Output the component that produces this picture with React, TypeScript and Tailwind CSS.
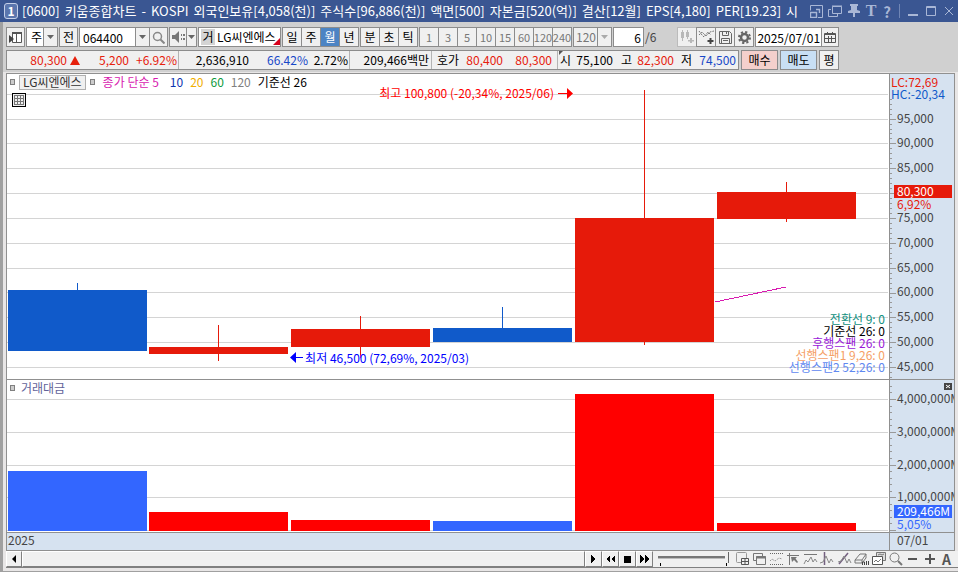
import type { ReactNode } from "react";
import clsx from "clsx";

const PRICE_H = 305;
const VOLUME_H = 152;
const PLOT_W = 882;

const priceY = (v: number) => 293 - (v - 45000) * 0.00497;
const volumeY = (v: number) => 150 - v * 32.75;

const red = "#e61a0a";
const blue = "#105aca";

const titleParts = [
  "[0600]", "키움종합차트", "-", "KOSPI", "외국인보유[4,058(천)]", "주식수[96,886(천)]", "액면[500]",
  "자본금[520(억)]", "결산[12월]", "EPS[4,180]", "PER[19.23]", "시",
];

const candles = [
  { x: 1, top: 216, bottom: 277, high: 209, low: 277, color: blue, vol: 397, volColor: "#3366ff" },
  { x: 142, top: 273, bottom: 280, high: 251, low: 287, color: red, vol: 438, volColor: "#ff0000" },
  { x: 284, top: 255, bottom: 273, high: 242, low: 284, color: red, vol: 446, volColor: "#ff0000" },
  { x: 426, top: 254, bottom: 268, high: 233, low: 268, color: blue, vol: 447, volColor: "#3366ff" },
  { x: 568, top: 144, bottom: 268, high: 16, low: 271, color: red, vol: 320, volColor: "#ff0000" },
  { x: 710, top: 118, bottom: 145, high: 108, low: 148, color: red, vol: 449, volColor: "#ff0000" },
];

const priceTicks = [95000, 90000, 85000, 80000, 75000, 70000, 65000, 60000, 55000, 50000, 45000];
const volumeTicks = [4, 3, 2, 1];

const indicators = [
  { text: "전환선 9: 0", color: "text-[#109080]" },
  { text: "기준선 26: 0", color: "text-black" },
  { text: "후행스팬 26: 0", color: "text-[#9a1ad8]" },
  { text: "선행스팬1 9,26: 0", color: "text-[#f5a066]" },
  { text: "선행스팬2 52,26: 0", color: "text-[#6088f0]" },
];

type BtnProps = { label?: string; children: ReactNode; className?: string; bg?: string };

const Btn = ({ label, children, className, bg = "bg-[#f0f0f0]" }: BtnProps) => (
  <button
    aria-label={label}
    className={clsx("flex h-5 shrink-0 items-center justify-center overflow-hidden border border-[#8c8c8c] leading-none", bg, className)}
  >
    {children}
  </button>
);

const Caret = ({ color = "#666" }: { color?: string }) => (
  <svg width="7" height="4" viewBox="0 0 7 4" fill={color}>
    <path d="M0 0h7L3.5 4z" />
  </svg>
);

const Select = ({ label, value, className, muted }: { label: string; value: string; className: string; muted?: boolean }) => (
  <div className={clsx("relative h-5 shrink-0 border border-[#8c8c8c]", className)}>
    <select aria-label={label} className={clsx("h-full w-full appearance-none", muted ? "bg-[#f0f0f0] pl-[2px] text-[#777]" : "bg-white pl-1")}>
      <option>{value}</option>
    </select>
    <span className="pointer-events-none absolute inset-y-0 right-0 flex w-[14px] items-center justify-center border-l border-[#8c8c8c] bg-[#f0f0f0]">
      <Caret color={muted ? "#aaa" : "#666"} />
    </span>
  </div>
);

const TitleBar = () => (
  <header className="flex h-[22px] items-center bg-[#3a5692] pl-1 text-white">
    <span className="flex h-4 w-[14px] items-center justify-center rounded-[3px] border border-[#c5d0e8] bg-[#5b76ae] text-[12px] font-bold leading-none">1</span>
    <h1 className="ml-1 flex min-w-0 flex-1 gap-[5px] overflow-hidden whitespace-nowrap text-[13px] leading-5">
      {titleParts.map((t) => (
        <span key={t}>{t}</span>
      ))}
    </h1>
    <div className="flex h-full items-center text-[#a9b7d6]">
      <button aria-label="창 크기" className="flex w-[18px] justify-center">
        <svg width="13" height="13" viewBox="0 0 13 13" fill="none" stroke="currentColor">
          <path d="M.5 5.500V.5h12v12H8" />
          <path d="M.5 7.500h6v5h-6zM6 4.500h3.500V8" strokeWidth="1.400" />
        </svg>
      </button>
      <button aria-label="창 복제" className="flex w-5 justify-center">
        <svg width="14" height="13" viewBox="0 0 14 13" fill="none" stroke="currentColor">
          <path d="M4.500 1.500h9v7h-9zM4 1h10" /><path d="M3 4.500H.5v7h9V9" />
        </svg>
      </button>
      <button aria-label="고정" className="flex w-[18px] justify-center">
        <svg width="12" height="14" viewBox="0 0 12 14" fill="currentColor">
          <path d="M2 0h8v2H9v4l3 1v2H7v4H5V9H0V7l3-1V2H2z" />
        </svg>
      </button>
      <button aria-label="글꼴" className="w-4 font-['Liberation_Serif',serif] text-[16px] font-bold leading-none">T</button>
      <button aria-label="도움말" className="w-4 text-[15px] font-bold leading-none">?</button>
      <span className="mx-1 h-[14px] w-px bg-[#7086b5]" />
      <button aria-label="최소화" className="w-[18px]">
        <svg width="18" height="12"><path d="M4 9h10v2H4z" fill="currentColor" /></svg>
      </button>
      <button aria-label="최대화" className="w-[18px]">
        <svg width="18" height="12" fill="none" stroke="currentColor"><path d="M4.500 1.500h9v9h-9zM4 2.500h10" /></svg>
      </button>
      <button aria-label="닫기" className="w-[18px]">
        <svg width="18" height="12" fill="none" stroke="currentColor"><path d="M5 2l8 8M13 2l-8 8" /></svg>
      </button>
    </div>
  </header>
);

const Toolbar = () => (
  <div className="flex h-5 gap-px overflow-hidden">
    <Btn label="메뉴 열기" className="w-[19px]">
      <svg width="15" height="13" viewBox="0 0 15 13">
        <path d="M4.500 1.500h9v10h-9z" fill="#fff" stroke="#555" />
        <path d="M4 1h10v2H4zM8 3h1v8H8z" fill="#555" />
        <path d="M1 4l5 4-5 4z" fill="#444" />
      </svg>
    </Btn>
    <Select label="종류" value="주" className="w-[32px]" />
    <Btn className="w-[19px]">전</Btn>
    <div className="flex">
      <input aria-label="종목코드" defaultValue="064400" className="h-5 w-[57px] border border-[#8c8c8c] bg-white pl-[3px]" />
      <Btn label="종목 목록" className="w-[14px] border-l-0"><Caret /></Btn>
      <Btn label="종목 검색" className="w-[18px] border-l-0">
        <svg width="13" height="13" fill="none" stroke="#888">
          <circle cx="5.500" cy="5.500" r="4" strokeWidth="1.500" /><path d="M8.500 8.500l4 4" strokeWidth="2" />
        </svg>
      </Btn>
    </div>
    <div className="flex">
      <Btn label="소리" className="w-[18px]">
        <svg width="15" height="12" fill="#777">
          <path d="M1 4h3l4-4v12L4 8H1zM10 3h1v2h-1zM10 7h1v2h-1zM12 3h2v2h-2zM12 7h2v2h-2z" />
        </svg>
      </Btn>
      <Btn label="소리 목록" className="w-[10px] border-l-0"><Caret /></Btn>
    </div>
    <div className="relative flex h-5 w-[83px] shrink-0 items-center overflow-hidden whitespace-nowrap border border-[#8c8c8c] bg-white">
      <button className="ml-[2px] h-4 w-[14px] bg-[#d4d4d4] leading-none">거</button>
      <span className="ml-[2px] leading-none">LG씨엔에스</span>
      <svg width="7" height="7" className="absolute bottom-[1px] right-0"><path d="M7 0v7H0z" fill="#d8001c" /></svg>
    </div>
    <div className="flex">
      {["일", "주", "월", "년"].map((t) => (
        <Btn key={t} bg={t === "월" ? "bg-[#4c84c4]" : undefined} className={clsx("-mr-px w-5 last:mr-0", t === "월" && "text-white")}>{t}</Btn>
      ))}
    </div>
    <div className="flex">
      {["분", "초", "틱"].map((t) => (
        <Btn key={t} className="-mr-px w-5 last:mr-0">{t}</Btn>
      ))}
    </div>
    <div className="flex text-[11px] text-[#777]">
      {["1", "3", "5", "10", "15", "60", "120", "240"].map((t) => (
        <Btn key={t} className="-mr-px w-5 last:mr-0">{t}</Btn>
      ))}
    </div>
    <Select label="분 단위" value="120" className="w-[39px]" muted />
    <label className="flex items-center">
      <input aria-label="표시 개수" defaultValue="6" className="h-5 w-[31px] border border-[#8c8c8c] bg-white pr-[2px] text-right" />
      <span className="ml-px text-[#444]">/6</span>
    </label>
    <div className="ml-5 flex">
      <Btn label="캔들 추가" className="-mr-px w-5 border-[#bbb]">
        <svg width="16" height="14" fill="#b8b8b8">
          <path d="M3 0h1v11H3zM2 2h3v6H2zM8 0h1v9H8zM7 2h3v5H7zM11 8h2v5h-2zM9 10h6v1.500H9z" />
        </svg>
      </Btn>
      <Btn label="지표 추가" className="-mr-px w-5">
        <svg width="17" height="15" fill="none" stroke="#777">
          <path d="M1 5l3-3 4 4 4-4 4-1M1 1l3 4 2 2 4-5 3 3" strokeDasharray="2 1" /><path d="M12.500 8v6M9.500 11h6" stroke="#444" strokeWidth="2" />
        </svg>
      </Btn>
      <Btn label="저장" className="-mr-px w-5">
        <svg width="15" height="15" fill="none" stroke="#666">
          <path d="M1.500 1.500h10l2 2v10h-12zM4.500 1.500v4h6v-4M3.500 13.500v-5h8v5" /><path d="M8.500 2v2M5 10.500h5" />
        </svg>
      </Btn>
      <Btn label="설정" className="w-5">
        <svg width="13" height="13" fill="none" stroke="#666">
          <circle cx="6.500" cy="6.500" r="3.500" strokeWidth="2.500" />
          <circle cx="6.500" cy="6.500" r="5.500" strokeWidth="2" strokeDasharray="2.200 2.120" />
        </svg>
      </Btn>
    </div>
    <div className="flex">
      <input aria-label="날짜" defaultValue="2025/07/01" className="h-5 w-[67px] border border-[#8c8c8c] bg-white pl-px" />
      <Btn label="달력" className="w-[17px] border-l-0">
        <svg width="12" height="11" fill="none" stroke="#555">
          <path d="M.5 1.500h11v9H.5zM0 2.500h12M4.500 4v6M7.500 4v6M1 6.500h10" /><path d="M3.500 0v2M8.500 0v2" />
        </svg>
      </Btn>
    </div>
  </div>
);

const Quote = () => (
  <div className="flex h-5 gap-[2px] overflow-hidden whitespace-nowrap leading-[18px]">
    <div className="flex w-[733px] shrink-0 border border-[#8c8c8c] bg-[#f0f0f0] text-right">
      <span className="w-[60px] text-[#e6200c]">80,300</span>
      <svg width="14" height="18" fill="#e6200c"><path d="M8 5l5 9H3z" /></svg>
      <span className="w-[48px] text-[#e6200c]">5,200</span>
      <span className="w-[50px] border-r border-[#b4b4b4] pr-px text-[#e6200c]">+6.92%</span>
      <span className="w-[70px]">2,636,910</span>
      <span className="w-[59px] text-[#1848c8]">66.42%</span>
      <span className="w-[42px] border-r border-[#b4b4b4] pr-px">2.72%</span>
      <span className="w-[82px] border-r border-[#b4b4b4] pr-[2px]">209,466백만</span>
      <span className="w-[27px]">호가</span>
      <span className="w-[44px] text-[#e6200c]">80,400</span>
      <span className="w-[55px] border-r border-[#b4b4b4] pr-[5px] text-[#e6200c]">80,300</span>
      <span className="relative w-[13px]">
        시
        <svg width="4" height="4" className="absolute left-px top-0" fill="#555"><path d="M0 0h4L0 4z" /></svg>
      </span>
      <span className="w-[42px]">75,100</span>
      <span className="w-[19px]">고</span>
      <span className="w-[42px] text-[#e6200c]">82,300</span>
      <span className="w-[18px]">저</span>
      <span className="w-[44px] text-[#1848c8]">74,500</span>
    </div>
    <Btn className="w-[37px]" bg="bg-[#f4d0cc]">매수</Btn>
    <Btn className="w-[37px]" bg="bg-[#c8dff4]">매도</Btn>
    <Btn className="w-5">평</Btn>
  </div>
);

const Marker = () => <span className="h-[6px] w-[5px] shrink-0 border border-[#808080] bg-[#ccc]" />;

// labels sit one pixel above their grid line
const AxisLabel = ({ y, height, children }: { y: number; height: number; children: ReactNode }) => (
  <span className="absolute left-[7px] -translate-y-1/2 leading-3" style={{ top: `${((y - 1) / height) * 100}%` }}>
    {children}
  </span>
);

const Ticks = ({ height, from, step, count, major }: { height: number; from: number; step: number; count: number; major: number }) => (
  <svg className="absolute inset-y-0 left-0 h-full w-[6px]" viewBox={`0 0 6 ${height}`} preserveAspectRatio="none" shapeRendering="crispEdges">
    {Array.from({ length: count }, (_, i) => (
      <rect key={i} x="0" y={Math.round(from - i * step)} width={i % 5 === major ? 6 : 2} height="1" fill="#999" />
    ))}
  </svg>
);

const PricePane = () => (
  <section className="grid min-h-0 flex-1 grid-cols-[1fr_65px]">
    <div className="relative">
      <svg className="absolute inset-0 h-full w-full" viewBox={`0 0 ${PLOT_W} ${PRICE_H}`} preserveAspectRatio="none" shapeRendering="crispEdges">
        {[100000, ...priceTicks].map((v) => (
          <rect key={v} x="0" y={Math.round(priceY(v))} width="881" height="1" fill="#d4d4d4" />
        ))}
        {candles.map((c) => (
          <g key={c.x} fill={c.color}>
            <rect x={c.x} y={c.top} width="139" height={c.bottom - c.top} />
            <rect x={c.x + 69} y={c.high} width="1" height={c.low - c.high} />
          </g>
        ))}
        <path d="M708 228L779 213" stroke="#d81ab0" fill="none" />
      </svg>
      <div className="absolute left-[3px] top-0 flex h-4 items-center gap-1 whitespace-nowrap">
        <Marker />
        <button className="h-[15px] border border-[#b0b0b0] bg-[#f0f0f0] px-[3px] leading-3 text-[#333]">LG씨엔에스</button>
        <Marker />
        <p className="flex gap-[7px] pl-1 leading-4">
          <span className="mr-1 text-[#d81ab0]">종가 단순 5</span>
          <span className="text-[#0c34b0]">10</span>
          <span className="text-[#f0ae00]">20</span>
          <span className="text-[#0c9a3c]">60</span>
          <span className="text-[#808080]">120</span>
          <span>기준선 26</span>
        </p>
      </div>
      <button aria-label="표 보기" className="absolute left-[5px] top-[19px]">
        <svg width="14" height="14" fill="none" shapeRendering="crispEdges">
          <path d="M.5.5h13v13H.5z" stroke="#000" fill="#f0f0f0" />
          <path d="M2.500 2.500h9v9h-9zM2 5.500h10M2 8.500h10M5.500 2v10M8.500 2v10" stroke="#777" />
        </svg>
      </button>
      <p className="absolute left-[42.200%] top-[13px] flex items-center gap-1 whitespace-nowrap leading-3 text-[#ff0000]">
        최고 100,800 (-20,34%, 2025/06)
        <svg width="16" height="11" fill="currentColor"><path d="M0 5h9V0l6 5.500L9 11V6H0z" /></svg>
      </p>
      <p className="absolute left-[32.100%] top-[91%] flex items-center gap-[2px] whitespace-nowrap leading-3 text-[#0000ff]">
        <svg width="13" height="11" fill="currentColor"><path d="M13 5H6V0L0 5.500 6 11V6h7z" /></svg>
        최저 46,500 (72,69%, 2025/03)
      </p>
      <ul className="absolute bottom-[6px] right-1 text-right leading-3">
        {indicators.map((i) => (
          <li key={i.text} className={i.color}>{i.text}</li>
        ))}
      </ul>
    </div>
    <div className="relative overflow-hidden border-l border-[#909090] bg-[#d6e2f0] text-[#444]">
      <Ticks height={PRICE_H} from={303} step={4.97} count={57} major={2} />
      <p className="pl-px pt-[2px] leading-3 text-[#e6200c]">LC:72,69</p>
      <p className="pl-px leading-3 text-[#105aca]">HC:-20,34</p>
      {priceTicks.filter((v) => v !== 80000).map((v) => (
        <AxisLabel key={v} y={priceY(v)} height={PRICE_H}>{v.toLocaleString("en-US")}</AxisLabel>
      ))}
      <div className="absolute left-1 right-[2px] -translate-y-[6px] leading-3 text-[#e61a0a]" style={{ top: `${(117 / PRICE_H) * 100}%` }}>
        <p className="h-[13px] bg-[#e61a0a] pl-[3px] text-white">80,300</p>
        <p className="pl-[3px]">6,92%</p>
      </div>
    </div>
  </section>
);

const VolumePane = () => (
  <section className="grid h-[153px] shrink-0 grid-cols-[1fr_65px] border-t border-[#909090]">
    <div className="relative">
      <svg className="absolute inset-0 h-full w-full" viewBox={`0 0 ${PLOT_W} ${VOLUME_H}`} preserveAspectRatio="none" shapeRendering="crispEdges">
        {[...volumeTicks, 0].map((v) => (
          <rect key={v} x="0" y={Math.round(volumeY(v))} width="881" height="1" fill="#d4d4d4" />
        ))}
        {candles.map((c) => (
          <rect key={c.x} x={c.x} y={c.vol - 306} width="139" height={457 - c.vol} fill={c.volColor} />
        ))}
      </svg>
      <div className="absolute left-[3px] top-0 flex h-4 items-center gap-[6px] text-[#62629a]">
        <Marker />
        거래대금
      </div>
    </div>
    <div className="relative overflow-hidden border-l border-[#909090] bg-[#d6e2f0] text-[#444]">
      <Ticks height={VOLUME_H} from={150} step={6.55} count={23} major={0} />
      {volumeTicks.map((v) => (
        <AxisLabel key={v} y={volumeY(v)} height={VOLUME_H}>{v},000,000M</AxisLabel>
      ))}
      <div className="absolute bottom-[2px] left-1 right-[2px] leading-3 text-[#3366ff]">
        <p className="h-[13px] bg-[#3366ff] pl-[3px] text-white">209,466M</p>
        <p className="pl-[3px]">5,05%</p>
      </div>
      <button aria-label="지표 닫기" className="absolute right-[2px] top-[3px]">
        <svg width="8" height="7"><path d="M0 0h8v7H0z" fill="#444" /><path d="M2 2l4 3M6 2L2 5" stroke="#fff" /></svg>
      </button>
    </div>
  </section>
);

const raised = "flex h-4 items-center justify-center border border-[#808080] border-l-white border-t-white bg-[#f0f0f0]";

const playback = [
  { label: "재생", d: "M5 3l4 4-4 4z" },
  { label: "뒤로", d: "M7 3v8L3 7zM12 3v8L8 7z" },
  { label: "정지", d: "M4 4h7v7H4z" },
  { label: "앞으로", d: "M3 3v8l4-4zM8 3v8l4-4z" },
];

const tools = [
  { label: "새 창", art: <><rect x="1.500" y=".5" width="10" height="10" rx="1" stroke="#999" /><path d="M6.500 6.500h7v6h-7zM10 6v7M6 9.500h8" fill="#f0f0f0" stroke="#555" /></> },
  { label: "창 겹치기", art: <><path d="M1.500 1.500h9v7h-9z" /><path d="M4.500 4.500h9v8h-9z" fill="#f0f0f0" /><path d="M4 5.500h10" strokeWidth="2" /></> },
  { label: "범위", art: <><path d="M1 1.500h13M1 12.500h13" stroke="#666" strokeDasharray="1 1" /><path d="M1 9l2-2 3 2 4-3 3 1" stroke="#999" strokeDasharray="2 1" /></> },
  { label: "좌측 기준", art: <><path d="M3.500 1v12M1 3.500h12" /><path d="M5 5h6L9.500 6.500 12 10l-1 1-3-3-2 2z" fill="#777" stroke="none" /></> },
  { label: "상단 기준", art: <><path d="M1 2.500h13" /><path d="M1 12l2-4 2 2 3-5 2 5 2-3 2 3" stroke="#888" /></> },
  { label: "수직선", art: <><path d="M4.500 0v13" stroke="#746080" strokeWidth="1.500" /><path d="M0 11l3-1 3-6 3 7 2-4 2 3" stroke="#888" /></> },
  { label: "추세선", art: <><path d="M2 12L11 1" stroke="#746080" strokeWidth="1.500" /><path d="M1 10l3-1 3-5 3 7 2-4 2 4" stroke="#888" /></> },
  { label: "모두 지우기", art: <><path d="M1 8l5-6h6l-4 6zM1 8v3h7V8M8 11l4-5V2" /><path d="M8.500 13v-3h2v3M12.500 9v4M14.500 9v4" stroke="#444" /></> },
  { label: "차트 복사", art: <><path d="M5.500.5h9v8h-9z" fill="#ddd" /><path d="M1.500 4.500h10v8h-10z" fill="#fff" stroke="#555" /><path d="M3 10l2-2 2 2 3-3M7 3l2-1 2 1 2-1" /></> },
  { label: "돋보기", art: <><circle cx="6.500" cy="5.500" r="4.500" /><path d="M10 9l4 4" strokeWidth="2" /></> },
  { label: "축소", art: <path d="M3 7h9" stroke="#555" strokeWidth="2" /> },
  { label: "확대", art: <path d="M3 7h10M8 2v10" stroke="#555" strokeWidth="2" /> },
];

const BottomBar = () => (
  <footer className="flex h-[17px] shrink-0 items-center border-b border-[#808080] bg-[#f0f0f0] pr-[3px]">
    <button aria-label="왼쪽으로" className={clsx(raised, "w-4 shrink-0")}>
      <svg width="14" height="14"><path d="M9 3v8L5 7z" /></svg>
    </button>
    <button aria-label="차트 스크롤" className={clsx(raised, "min-w-0 flex-1")} />
    {playback.map((p) => (
      <button key={p.label} aria-label={p.label} className={clsx(raised, "w-[17px] shrink-0")}>
        <svg width="15" height="14" shapeRendering="crispEdges"><path d={p.d} /></svg>
      </button>
    ))}
    <div className="relative mx-[5px] h-4 w-[71px] shrink-0">
      <input
        type="range"
        aria-label="재생 속도"
        defaultValue="100"
        className="block h-3 w-full appearance-none bg-transparent [&::-webkit-slider-runnable-track]:h-[3px] [&::-webkit-slider-runnable-track]:border-b [&::-webkit-slider-runnable-track]:border-[#bbb] [&::-webkit-slider-runnable-track]:bg-[#777] [&::-webkit-slider-thumb]:-mt-1 [&::-webkit-slider-thumb]:h-[11px] [&::-webkit-slider-thumb]:w-1 [&::-webkit-slider-thumb]:appearance-none [&::-webkit-slider-thumb]:border-r [&::-webkit-slider-thumb]:border-[#666] [&::-webkit-slider-thumb]:bg-[#f0f0f0]"
      />
      <div className="flex justify-between px-[2px]">
        <span className="h-[3px] w-px bg-black" />
        <span className="h-[3px] w-px bg-black" />
      </div>
    </div>
    {tools.map((t) => (
      <button key={t.label} aria-label={t.label} className="flex w-[17px] shrink-0 justify-center">
        <svg width="15" height="14" viewBox="0 0 15 14" fill="none" stroke="#777">{t.art}</svg>
      </button>
    ))}
    <button className="w-[17px] shrink-0 text-center text-[14px] font-bold leading-none text-[#555]">A</button>
  </footer>
);

const App = () => (
  <div className="flex h-screen min-h-[400px] flex-col bg-[#d0d0d0] font-['Noto_Sans_CJK_KR',sans-serif] text-[12px] text-black">
    <TitleBar />
    <main className="flex min-h-0 flex-1 flex-col border-b border-l-[3px] border-[#a0a0a0]">
      <div className="flex flex-col gap-[3px] px-[3px] pb-[2px] pt-[5px]">
        <Toolbar />
        <Quote />
      </div>
      <div className="flex min-h-0 flex-1 flex-col bg-[#e8e6e6] pb-[3px] pl-[3px] pt-px">
        <div className="mr-[3px] flex min-h-0 flex-1 flex-col border border-[#909090] bg-white">
          <PricePane />
          <VolumePane />
          <div className="grid h-[18px] shrink-0 grid-cols-[1fr_65px] border-t border-[#909090] bg-[#d6e2f0] leading-[14px] text-[#444]">
            <span className="pl-px">2025</span>
            <span className="border-l border-[#909090] pl-[7px]">07/01</span>
          </div>
        </div>
        <BottomBar />
      </div>
    </main>
  </div>
);

export default App;
